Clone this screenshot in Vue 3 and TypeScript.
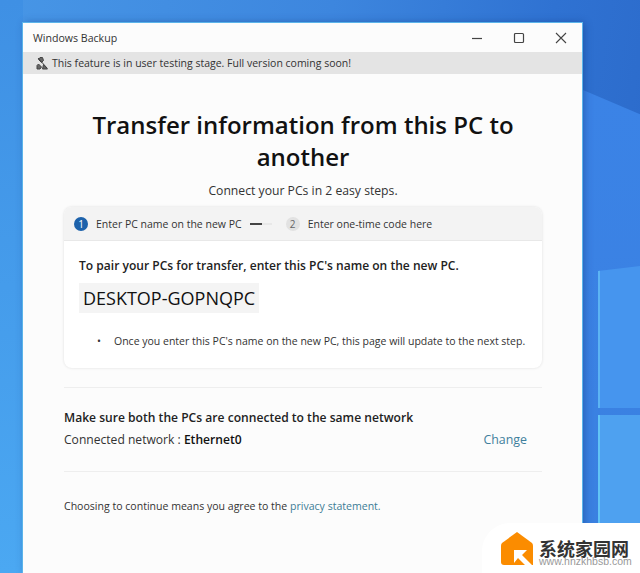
<script setup lang="ts">
const steps = [
  { n: 1, label: 'Enter PC name on the new PC', active: true },
  { n: 2, label: 'Enter one-time code here', active: false },
]
</script>

<template>
  <div class="desktop">
    <div class="wall wall-left"></div>
    <div class="wall wall-beam"></div>
    <div class="wall wall-pane-top"></div>
    <div class="wall wall-pane-bottom"></div>
    <div class="window">
      <div class="titlebar">
        <span class="app-name">Windows Backup</span>
        <div class="controls">
          <svg width="14" height="14" viewBox="0 0 14 14"><path d="M2 7.5h10" stroke="#444" stroke-width="1.2" fill="none" /></svg>
          <svg width="14" height="14" viewBox="0 0 14 14"><rect x="2.5" y="2.5" width="9" height="9" rx="1" stroke="#444" stroke-width="1.2" fill="none" /></svg>
          <svg width="14" height="14" viewBox="0 0 14 14"><path d="M2 2l10 10M12 2L2 12" stroke="#444" stroke-width="1.1" fill="none" /></svg>
        </div>
      </div>
      <div class="notice">
        <svg class="notice-icon" width="13" height="14" viewBox="0 0 13 14">
          <path d="M2 2l9 10M4 1.500h2.500l1 3-2 2-3-3zM2.500 8l3 3-1.500 2H1V9.500zM7.500 8.500l4 4.500H6.500z" stroke="#444" stroke-width="1" fill="#666" />
        </svg>
        <span>This feature is in user testing stage. Full version coming soon!</span>
      </div>
      <main class="content">
        <h1>Transfer information from this PC to another</h1>
        <p class="subtitle">Connect your PCs in 2 easy steps.</p>
        <section class="card">
          <div class="stepper">
            <template v-for="(s, i) in steps" :key="s.n">
              <span class="badge" :class="{ on: s.active }">{{ s.n }}</span>
              <span class="step-label">{{ s.label }}</span>
              <span v-if="i === 0" class="connector"></span>
            </template>
          </div>
          <div class="card-body">
            <p class="pair">To pair your PCs for transfer, enter this PC's name on the new PC.</p>
            <div class="pc-name">DESKTOP-GOPNQPC</div>
            <div class="hint"><span class="bullet">•</span><span>Once you enter this PC's name on the new PC, this page will update to the next step.</span></div>
          </div>
        </section>
        <hr />
        <section class="network">
          <div>
            <p class="net-title">Make sure both the PCs are connected to the same network</p>
            <p class="net-line">Connected network : <b>Ethernet0</b></p>
          </div>
          <a class="change">Change</a>
        </section>
        <hr />
        <p class="legal">Choosing to continue means you agree to the <a>privacy statement.</a></p>
      </main>
    </div>
    <div class="watermark">
      <svg width="32" height="33" viewBox="0 0 32 33">
        <path d="M16 0 L31 11 Q32 12 32 14 V33 H3 Q0 33 0 30 V14 Q0 12 1 11 Z" fill="#fb8c00" />
        <path d="M13 27 L13 18 L26 18 L21 23 L31 33 H24 L17 26 L13 31 Z" fill="#fff" />
      </svg>
      <div class="wm-text">
        <span class="wm-cn">系统家园网</span>
        <span class="wm-url">www.hnzkhbsb.com</span>
      </div>
    </div>
  </div>
</template>

<style>
html, body { margin: 0; padding: 0; }
</style>

<style scoped>
.desktop {
  position: relative;
  width: 640px;
  height: 573px;
  overflow: hidden;
  padding: 23px 58px 0 23px;
  box-sizing: border-box;
  background: linear-gradient(100deg, #4796e6 0%, #3d86de 45%, #2f72d2 75%, #2b68c8 100%);
  font-family: "Open Sans", "Noto Sans", sans-serif;
  color: #1c1c1c;
}
.wall { position: absolute; }
.wall-left {
  left: 0;
  top: 0;
  width: 23px;
  height: 573px;
  background: linear-gradient(180deg, #3f90e4, #4ba8f2);
}
.wall-beam {
  left: 583px;
  top: 90px;
  width: 57px;
  height: 483px;
  background: linear-gradient(180deg, #3b83e6, #3a80e0);
  clip-path: polygon(0 0, 100% 5%, 100% 100%, 0 100%);
}
.wall-pane-top {
  left: 598px;
  top: 266px;
  width: 42px;
  height: 142px;
  background: #4695ee;
  border-left: 2px solid #5cb4f4;
  box-sizing: border-box;
  clip-path: polygon(0 5px, 100% 0, 100% 100%, 0 100%);
}
.wall-pane-bottom {
  left: 598px;
  top: 415px;
  width: 42px;
  height: 158px;
  background: #4ea1f0;
  border-left: 2px solid #62c4f6;
  box-sizing: border-box;
}
.window {
  position: relative;
  height: 550px;
  background: #fcfcfc;
  box-shadow: 0 0 0 1px #5bb4ea, 2px 0 8px rgba(10, 50, 120, .45);
  display: flex;
  flex-direction: column;
}
.titlebar {
  height: 29px;
  flex: none;
  display: flex;
  align-items: center;
  justify-content: space-between;
  padding: 0 14px 0 10px;
}
.app-name { font-size: 10.6px; color: #333; }
.controls { display: flex; gap: 28px; }
.notice {
  height: 22px;
  flex: none;
  background: #e4e4e4;
  display: flex;
  align-items: center;
  gap: 3px;
  padding-left: 13px;
  font-size: 10.5px;
  color: #333;
}
.notice-icon { flex: none; }
.content {
  padding: 0 40px 0 41px;
  flex: 1;
  min-height: 0;
}
h1 {
  margin: 35px auto 0;
  width: 460px;
  font-size: 24px;
  line-height: 32px;
  font-weight: 600;
  text-align: center;
  color: #111;
}
.subtitle { margin: 9px 0 0; text-align: center; font-size: 12.2px; line-height: 18px; color: #333; }
.card {
  margin-top: 7px;
  border-radius: 8px;
  box-shadow: 0 0 3px rgba(0, 0, 0, .12);
  background: #fff;
  height: 161px;
}
.stepper {
  height: 34px;
  background: #f3f3f3;
  border-radius: 8px 8px 0 0;
  border-bottom: 1px solid #e8e8e8;
  display: flex;
  align-items: center;
  padding-left: 10px;
  box-sizing: border-box;
  font-size: 10.5px;
  color: #333;
}
.badge {
  width: 14px;
  height: 14px;
  border-radius: 50%;
  background: #e2e2e2;
  color: #666;
  font-size: 10px;
  display: flex;
  align-items: center;
  justify-content: center;
  margin-right: 8px;
}
.badge.on { background: #1d62ab; color: #fff; }
.connector {
  width: 22px;
  height: 2px;
  margin: 0 14px 0 8px;
  background: linear-gradient(90deg, #444 0 55%, #e8e8e8 55% 100%);
}
.card-body { padding: 16px 15px 0; }
.pair { margin: 0; font-size: 12.05px; line-height: 18px; font-weight: 600; color: #222; }
.pc-name {
  display: inline-block;
  margin-top: 8px;
  padding: 0 4px;
  height: 30px;
  line-height: 30px;
  background: #f4f4f4;
  font-size: 18px;
  font-weight: 500;
  color: #111;
}
.hint { margin-top: 20px; display: flex; font-size: 10.5px; line-height: 16px; color: #333; white-space: nowrap; }
.bullet { width: 35px; padding-left: 18px; box-sizing: border-box; flex: none; }
hr { border: 0; border-top: 1px solid #eeeeee; margin: 0; }
.card + hr { margin-top: 19px; }
.network {
  display: flex;
  justify-content: space-between;
  align-items: flex-start;
  padding: 21px 15px 0 0;
  height: 83px;
  box-sizing: border-box;
}
.net-title { margin: 0; font-size: 12.1px; line-height: 18px; font-weight: 600; color: #222; }
.net-line { margin: 4px 0 0; font-size: 12.1px; line-height: 18px; color: #333; }
.net-line b { font-weight: 600; color: #111; }
.change { margin-top: 22px; font-size: 12.4px; line-height: 18px; color: #3f7f9c; }
.legal { margin: 26px 0 0; font-size: 10.55px; line-height: 16px; color: #333; }
.legal a { color: #3d7d96; }
.watermark {
  position: absolute;
  right: 0;
  bottom: 0;
  width: 158px;
  height: 50px;
  background: #fff;
  border-top-left-radius: 28px;
  display: flex;
  align-items: flex-start;
  padding: 9px 0 0 19px;
  box-sizing: border-box;
  gap: 6px;
}
.wm-text { display: flex; flex-direction: column; margin-top: 8px; }
.wm-cn { font-family: "Noto Sans CJK SC", sans-serif; font-size: 18px; line-height: 16px; font-weight: 700; color: #333; }
.wm-url { font-family: "Liberation Sans", sans-serif; font-size: 10.5px; line-height: 11px; color: #999; }
</style>
